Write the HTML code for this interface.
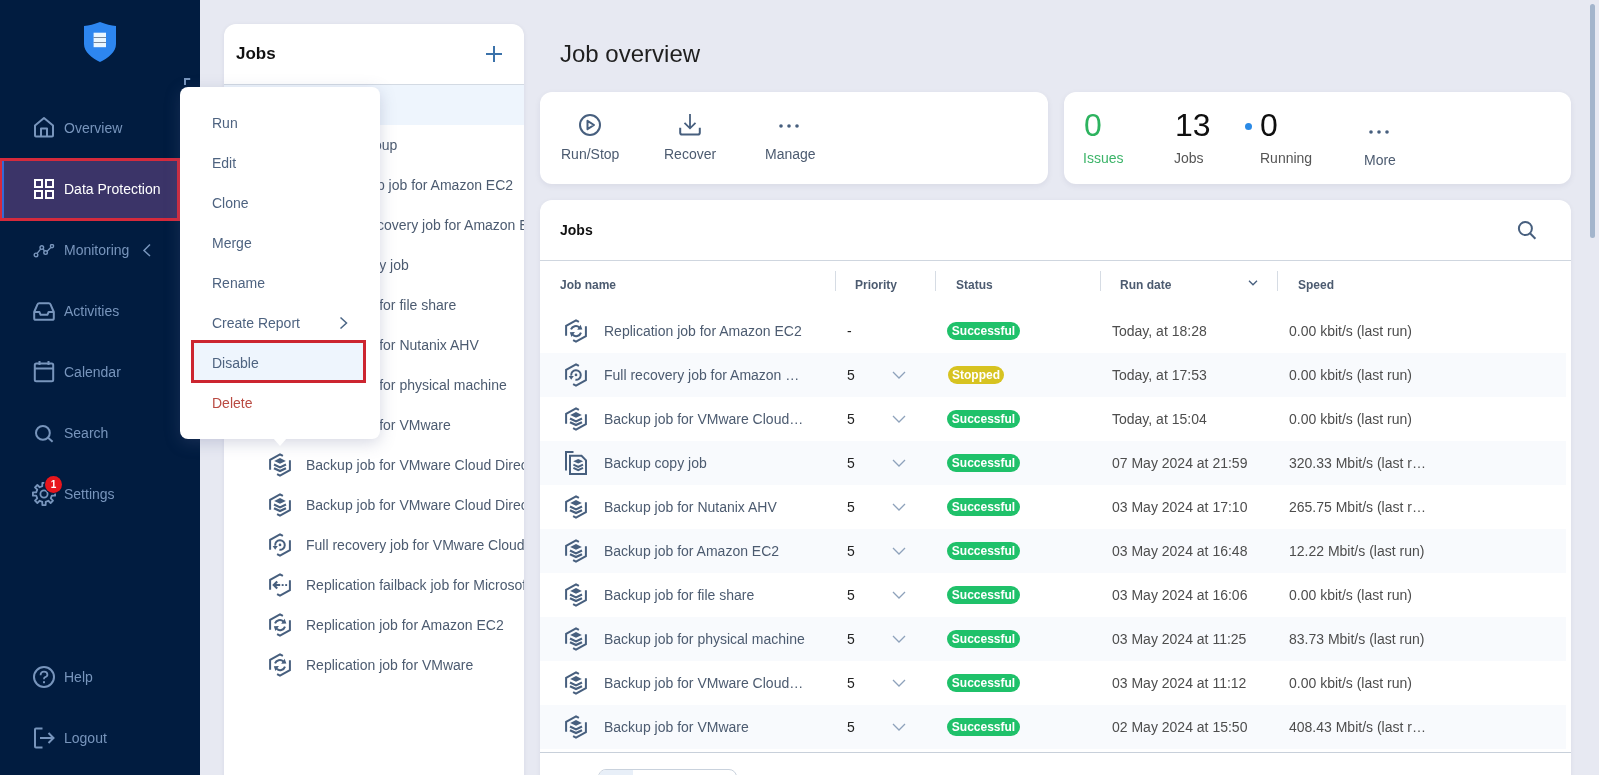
<!DOCTYPE html>
<html><head><meta charset="utf-8">
<style>
*{box-sizing:border-box;margin:0;padding:0}
html,body{width:1599px;height:775px;overflow:hidden;background:#e7e9f2;font-family:"Liberation Sans",sans-serif;}
.abs{position:absolute}
#root{position:absolute;left:0;top:0;width:1599px;height:775px;will-change:transform}
#sb{position:absolute;left:0;top:0;width:200px;height:775px;background:#011c40}
.nav{position:absolute;left:0;width:200px;height:40px;color:#7895bc;font-size:14px}
.nav .ic{position:absolute}
.nav .lb{position:absolute;left:64px;top:12px;line-height:16px}
#jl{position:absolute;left:224px;top:24px;width:300px;height:800px;background:#fff;border-radius:12px 12px 0 0;box-shadow:0 1px 5px rgba(30,30,70,.07)}
.card{position:absolute;background:#fff;border-radius:12px}
.li{position:absolute;left:0;width:300px;height:40px;font-size:14px;color:#4a6585}
.li .t{position:absolute;left:82px;top:13px;line-height:16px;white-space:nowrap}
.li svg{position:absolute;left:44px;top:8px}
#menu{position:absolute;left:180px;top:87px;width:200px;height:352px;background:#fff;border-radius:8px;box-shadow:0 4px 16px rgba(90,100,145,.25)}
.mi{position:absolute;left:0;width:200px;height:40px;font-size:14px;color:#4a6585}
.mi span{position:absolute;left:32px;top:13px;line-height:16px}
.lt{font-size:14px;line-height:16px;color:#4c5b70;white-space:nowrap}
.mt{font-size:14px;line-height:16px;white-space:nowrap}
.ct{font-size:14px;line-height:16px;color:#4c5b70;white-space:nowrap}
.num{font-size:32px;line-height:36px;white-space:nowrap}
.th{font-size:12px;font-weight:bold;line-height:14px;color:#4c5b70;white-space:nowrap}
.badge{height:18px;border-radius:9px;color:#fff;font-weight:bold;font-size:12px;line-height:18px;text-align:center}
</style></head><body><div id="root">

<div id="sb">
<svg class="abs" style="left:84px;top:22px" width="32" height="40" viewBox="0 0 32 40"><path d="M16 0 C10 2.5 5 3.5 0 4 V22 C0 30 8 36 16 40 C24 36 32 30 32 22 V4 C27 3.5 22 2.5 16 0Z" fill="#2d86f0"/><rect x="9.6" y="10.7" width="12.4" height="14.5" fill="#eaf6ff"/><rect x="9.6" y="15.2" width="12.4" height="0.7" fill="#4a5a70"/><rect x="9.6" y="20" width="12.4" height="0.7" fill="#4a5a70"/></svg>
<svg class="abs" style="left:184px;top:78px" width="8" height="8" viewBox="0 0 8 8"><path d="M1 7V1H6.2" stroke="#7895bc" stroke-width="2" fill="none"/></svg>

<div class="nav" style="top:108px">
<svg class="ic" style="left:33px;top:8px" width="22" height="22" viewBox="0 0 22 22" fill="none" stroke="#7895bc" stroke-width="2" stroke-linejoin="round"><path d="M2 9.5 L11 2 L20 9.5 V19.5 Q20 20.5 19 20.5 H3 Q2 20.5 2 19.5Z"/><path d="M8 20.5 V12.5 H14 V20.5"/></svg>
<span class="lb">Overview</span></div>

<div class="abs" style="left:-1px;top:158px;width:181px;height:63px;background:#3b3468;border:3px solid #d52a3c"></div>
<div class="abs" style="left:2px;top:161px;width:2px;height:57px;background:#3569d4"></div>
<div class="nav" style="top:169px;color:#fff">
<svg class="ic" style="left:34px;top:10px" width="20" height="20" viewBox="0 0 20 20" fill="none" stroke="#fff" stroke-width="2"><rect x="1" y="1" width="7" height="7"/><rect x="12" y="1" width="7" height="7"/><rect x="1" y="12" width="7" height="7"/><rect x="12" y="12" width="7" height="7"/></svg>
<span class="lb">Data Protection</span></div>

<div class="nav" style="top:230px">
<svg class="ic" style="left:33px;top:14px" width="22" height="15" viewBox="0 -0.5 22 15" fill="none" stroke="#7895bc" stroke-width="1.4"><path d="M4.1 8.9 L7.6 4.6 M10.1 4.5 L11.4 6.4 M13.9 7 L17.8 3.1"/><circle cx="3" cy="10.4" r="1.8"/><circle cx="8.8" cy="3.1" r="1.8"/><circle cx="12.6" cy="8.1" r="1.8"/><circle cx="19" cy="1.6" r="1.6"/></svg>
<span class="lb">Monitoring</span>
<svg class="abs" style="left:142px;top:13px" width="10" height="14" viewBox="0 0 10 14" fill="none" stroke="#7895bc" stroke-width="1.5"><path d="M8 1.5 L2 7.5 L8 13"/></svg></div>

<div class="nav" style="top:291px">
<svg class="ic" style="left:33px;top:11px" width="22" height="19" viewBox="0 0 22 19" fill="none" stroke="#7895bc" stroke-width="2" stroke-linejoin="round"><path d="M1.2 10 L4.6 2.2 Q5 1.2 6.2 1.2 H15.8 Q17 1.2 17.4 2.2 L20.8 10 V16.2 Q20.8 17.8 19.2 17.8 H2.8 Q1.2 17.8 1.2 16.2Z"/><path d="M1.2 10 H6.4 L7.6 12.8 H14.4 L15.6 10 H20.8"/></svg>
<span class="lb">Activities</span></div>

<div class="nav" style="top:352px">
<svg class="ic" style="left:33px;top:8px" width="22" height="23" viewBox="0 0 22 23" fill="none" stroke="#7895bc" stroke-width="2" stroke-linejoin="round"><rect x="1.8" y="3.5" width="18.4" height="17.8" rx="1.5"/><path d="M1.8 8.5 H20.2 M6.5 1 V5 M15.5 1 V5"/></svg>
<span class="lb">Calendar</span></div>

<div class="nav" style="top:413px">
<svg class="ic" style="left:34px;top:12px" width="20" height="18" viewBox="0 0 20 18" fill="none" stroke="#7895bc" stroke-width="2"><circle cx="8.9" cy="7.9" r="6.9"/><path d="M13.8 12.6 L18.6 16.8"/></svg>
<span class="lb">Search</span></div>

<div class="nav" style="top:474px">
<svg class="ic" style="left:31px;top:7px" width="26" height="26" viewBox="0 0 26 26" fill="none" stroke="#7895bc" stroke-width="1.8" stroke-linejoin="round"><path d="M11.29 5.19 L11.33 1.92 L14.67 1.92 L14.71 5.19 L17.31 6.26 L19.65 3.99 L22.01 6.35 L19.74 8.69 L20.81 11.29 L24.08 11.33 L24.08 14.67 L20.81 14.71 L19.74 17.31 L22.01 19.65 L19.65 22.01 L17.31 19.74 L14.71 20.81 L14.67 24.08 L11.33 24.08 L11.29 20.81 L8.69 19.74 L6.35 22.01 L3.99 19.65 L6.26 17.31 L5.19 14.71 L1.92 14.67 L1.92 11.33 L5.19 11.29 L6.26 8.69 L3.99 6.35 L6.35 3.99 L8.69 6.26Z"/><circle cx="13" cy="13" r="3.6"/></svg>
<span class="lb">Settings</span>
<div class="abs" style="left:45px;top:2px;width:17px;height:17px;border-radius:50%;background:#e8161c;box-shadow:0 0 0 1px #011c40;color:#fff;font-weight:bold;font-size:10px;line-height:17px;text-align:center">1</div></div>

<div class="nav" style="top:657px">
<svg class="ic" style="left:33px;top:9px" width="22" height="22" viewBox="0 0 22 22" fill="none" stroke="#7895bc" stroke-width="2"><circle cx="11" cy="11" r="10"/><path d="M7.6 9.2 Q7.6 5.6 11 5.6 Q14.4 5.6 14.4 8.8 Q14.4 10.6 11.8 11.4 Q11 11.8 11 13.2" stroke-width="1.8"/><rect x="10" y="15.2" width="2" height="2" fill="#7895bc" stroke="none"/></svg>
<span class="lb">Help</span></div>

<div class="nav" style="top:718px">
<svg class="ic" style="left:33px;top:9px" width="22" height="22" viewBox="0 0 22 22" fill="none" stroke="#7895bc" stroke-width="2"><path d="M9.5 1.5 H3 Q2 1.5 2 2.5 V19.5 Q2 20.5 3 20.5 H9.5"/><path d="M7 11 H20.5 M15.5 6 L20.5 11 L15.5 16"/></svg>
<span class="lb">Logout</span></div>
</div>

<div class="abs" style="left:560px;top:40px;font-size:24px;line-height:28px;color:#1f1f1f;white-space:nowrap">Job overview</div>
<div class="card" style="left:540px;top:92px;width:508px;height:92px;box-shadow:0 2px 6px rgba(30,30,70,.07)">
<svg class="abs" style="left:39px;top:22px" width="22" height="22" viewBox="0 0 22 22" fill="none" stroke="#475f7e" stroke-width="2"><circle cx="11" cy="11" r="10"/><path d="M8.5 6.8 L15 11 L8.5 15.2Z" stroke-linejoin="round"/></svg>
<div class="abs ct" style="left:21px;top:54px">Run/Stop</div>
<svg class="abs" style="left:138px;top:21px" width="24" height="23" viewBox="0 0 24 23" fill="none" stroke="#475f7e" stroke-width="2"><path d="M2.2 14.8 V19.8 Q2.2 21.6 4 21.6 H20 Q21.8 21.6 21.8 19.8 V14.8"/><path d="M12 1 V15 M6.5 9.8 L12 15.3 L17.5 9.8" stroke-width="1.8"/></svg>
<div class="abs ct" style="left:124px;top:54px">Recover</div>
<svg class="abs" style="left:238px;top:31px" width="22" height="6" viewBox="0 0 22 6" fill="#475f7e"><circle cx="3" cy="3" r="1.8"/><circle cx="11" cy="3" r="1.8"/><circle cx="19" cy="3" r="1.8"/></svg>
<div class="abs ct" style="left:225px;top:54px">Manage</div>
</div>
<div class="card" style="left:1064px;top:92px;width:507px;height:92px;box-shadow:0 2px 6px rgba(30,30,70,.07)">
<div class="abs num" style="left:20px;top:15px;color:#2db35f">0</div>
<div class="abs ct" style="left:19px;top:58px;color:#3cb469">Issues</div>
<div class="abs num" style="left:111px;top:15px;color:#0f0f0f">13</div>
<div class="abs ct" style="left:110px;top:58px;color:#555">Jobs</div>
<div class="abs" style="left:181px;top:30.5px;width:7px;height:7px;border-radius:50%;background:#2b8ae6"></div>
<div class="abs num" style="left:196px;top:15px;color:#0f0f0f">0</div>
<div class="abs ct" style="left:196px;top:58px;color:#555">Running</div>
<svg class="abs" style="left:304px;top:37px" width="22" height="6" viewBox="0 0 22 6" fill="#475f7e"><circle cx="3" cy="3" r="1.8"/><circle cx="11" cy="3" r="1.8"/><circle cx="19" cy="3" r="1.8"/></svg>
<div class="abs ct" style="left:300px;top:60px">More</div>
</div>
<div class="card" style="left:540px;top:200px;width:1031px;height:600px;border-radius:12px 12px 0 0;box-shadow:0 1px 5px rgba(30,30,70,.06)">
<div class="abs" style="left:20px;top:22px;font-weight:bold;font-size:14px;line-height:16px;color:#111">Jobs</div>
<svg class="abs" style="left:977px;top:21px" width="20" height="20" viewBox="0 0 20 20" fill="none" stroke="#475f7e" stroke-width="2"><circle cx="8.4" cy="7.5" r="6.5"/><path d="M13 12.3 L18.4 17.7"/></svg>
<div class="abs" style="left:0;top:60px;width:1031px;height:1px;background:#cfd6df"></div>
<div class="abs th" style="left:20px;top:78px">Job name</div>
<div class="abs th" style="left:315px;top:78px">Priority</div>
<div class="abs th" style="left:416px;top:78px">Status</div>
<div class="abs th" style="left:580px;top:78px">Run date</div>
<div class="abs th" style="left:758px;top:78px">Speed</div>
<div class="abs" style="left:295px;top:71px;width:1px;height:20px;background:#d6dce4"></div>
<div class="abs" style="left:395px;top:71px;width:1px;height:20px;background:#d6dce4"></div>
<div class="abs" style="left:560px;top:71px;width:1px;height:20px;background:#d6dce4"></div>
<div class="abs" style="left:737px;top:71px;width:1px;height:20px;background:#d6dce4"></div>
<svg class="abs" style="left:708px;top:80px" width="10" height="6" viewBox="0 0 10 6" fill="none" stroke="#475f7e" stroke-width="1.3"><path d="M1 0.8 L5 4.8 L9 0.8"/></svg>
<div class="abs" style="left:0;top:109px;width:1026px;height:44px;background:#fff"></div>
<svg class="abs" style="left:25px;top:119px" width="22" height="24" viewBox="0 0 22 24" fill="none" stroke="#475f7e" stroke-width="2"><path d="M1.1 16.8 V6.8 L11 1.3 L13.9 2.9" /><path d="M20.9 7.2 V17.2 L11 22.7 L8.1 21.1" /><path d="M6 10.4 A5.2 5.2 0 0 1 14.4 8.4" /><path d="M16 13.6 A5.2 5.2 0 0 1 7.6 15.8" /><path d="M15.6 5.8 L17.4 10.4 L12.2 10.8Z" fill="#475f7e" stroke="none"/><path d="M4.8 13.2 L6.4 18 L9.9 13Z" fill="#475f7e" stroke="none"/></svg>
<div class="abs lt" style="left:64px;top:123px">Replication job for Amazon EC2</div>
<div class="abs lt" style="left:307px;top:123px;color:#222">-</div>
<div class="abs badge" style="left:407px;top:122px;width:73px;background:#1fc16a">Successful</div>
<div class="abs lt" style="left:572px;top:123px;color:#4d4d4d">Today, at 18:28</div>
<div class="abs lt" style="left:749px;top:123px;color:#4d4d4d">0.00 kbit/s (last run)</div>
<div class="abs" style="left:0;top:153px;width:1026px;height:44px;background:#f8fafd"></div>
<svg class="abs" style="left:25px;top:163px" width="22" height="24" viewBox="0 0 22 24" fill="none" stroke="#475f7e" stroke-width="2"><path d="M1.1 16.8 V6.8 L11 1.3 L13.9 2.9" /><path d="M20.9 7.2 V17.2 L11 22.7 L8.1 21.1" /><path d="M6.2 12.6 A4.8 4.8 0 1 1 10.4 16.8" /><path d="M3.6 13 L8.8 13 L6.2 16.8Z" fill="#475f7e" stroke="none"/><circle cx="11" cy="11.9" r="1.35" fill="#475f7e" stroke="none"/></svg>
<div class="abs lt" style="left:64px;top:167px">Full recovery job for Amazon …</div>
<div class="abs lt" style="left:307px;top:167px;color:#222">5</div>
<svg class="abs" style="left:352px;top:171px" width="14" height="8" viewBox="0 0 14 8" fill="none" stroke="#8ea2bb" stroke-width="1.3"><path d="M1 1 L7 7 L13 1"/></svg>
<div class="abs badge" style="left:408px;top:166px;width:56px;background:#d7c321">Stopped</div>
<div class="abs lt" style="left:572px;top:167px;color:#4d4d4d">Today, at 17:53</div>
<div class="abs lt" style="left:749px;top:167px;color:#4d4d4d">0.00 kbit/s (last run)</div>
<div class="abs" style="left:0;top:197px;width:1026px;height:44px;background:#fff"></div>
<svg class="abs" style="left:25px;top:207px" width="22" height="24" viewBox="0 0 22 24" fill="none" stroke="#475f7e" stroke-width="2"><path d="M1.1 16.8 V6.8 L11 1.3 L13.9 2.9" /><path d="M20.9 7.2 V17.2 L11 22.7 L8.1 21.1" /><path d="M5.2 7.9 L11 5.1 L16.8 7.9 L11 10.7Z" fill="#475f7e" stroke="none"/><path d="M5 11.6 L11 14.4 L17 11.6 M5 15.3 L11 18.1 L17 15.3" stroke-width="2.2"/></svg>
<div class="abs lt" style="left:64px;top:211px">Backup job for VMware Cloud…</div>
<div class="abs lt" style="left:307px;top:211px;color:#222">5</div>
<svg class="abs" style="left:352px;top:215px" width="14" height="8" viewBox="0 0 14 8" fill="none" stroke="#8ea2bb" stroke-width="1.3"><path d="M1 1 L7 7 L13 1"/></svg>
<div class="abs badge" style="left:407px;top:210px;width:73px;background:#1fc16a">Successful</div>
<div class="abs lt" style="left:572px;top:211px;color:#4d4d4d">Today, at 15:04</div>
<div class="abs lt" style="left:749px;top:211px;color:#4d4d4d">0.00 kbit/s (last run)</div>
<div class="abs" style="left:0;top:241px;width:1026px;height:44px;background:#f8fafd"></div>
<svg class="abs" style="left:25px;top:251px" width="22" height="24" viewBox="0 0 22 24" fill="none" stroke="#475f7e" stroke-width="2"><path d="M1 19.5 V1 H8.5"/><path d="M5 4.8 H16.5 L21 9.4 V23 H5Z"/><path d="M8.2 10.2 L13.2 7.9 L18.2 10.2 L13.2 12.5Z" fill="#475f7e" stroke="none"/><path d="M8.4 13.6 L13.2 15.9 L18 13.6 M8.4 16.9 L13.2 19.2 L18 16.9"/></svg>
<div class="abs lt" style="left:64px;top:255px">Backup copy job</div>
<div class="abs lt" style="left:307px;top:255px;color:#222">5</div>
<svg class="abs" style="left:352px;top:259px" width="14" height="8" viewBox="0 0 14 8" fill="none" stroke="#8ea2bb" stroke-width="1.3"><path d="M1 1 L7 7 L13 1"/></svg>
<div class="abs badge" style="left:407px;top:254px;width:73px;background:#1fc16a">Successful</div>
<div class="abs lt" style="left:572px;top:255px;color:#4d4d4d">07 May 2024 at 21:59</div>
<div class="abs lt" style="left:749px;top:255px;color:#4d4d4d">320.33 Mbit/s (last r…</div>
<div class="abs" style="left:0;top:285px;width:1026px;height:44px;background:#fff"></div>
<svg class="abs" style="left:25px;top:295px" width="22" height="24" viewBox="0 0 22 24" fill="none" stroke="#475f7e" stroke-width="2"><path d="M1.1 16.8 V6.8 L11 1.3 L13.9 2.9" /><path d="M20.9 7.2 V17.2 L11 22.7 L8.1 21.1" /><path d="M5.2 7.9 L11 5.1 L16.8 7.9 L11 10.7Z" fill="#475f7e" stroke="none"/><path d="M5 11.6 L11 14.4 L17 11.6 M5 15.3 L11 18.1 L17 15.3" stroke-width="2.2"/></svg>
<div class="abs lt" style="left:64px;top:299px">Backup job for Nutanix AHV</div>
<div class="abs lt" style="left:307px;top:299px;color:#222">5</div>
<svg class="abs" style="left:352px;top:303px" width="14" height="8" viewBox="0 0 14 8" fill="none" stroke="#8ea2bb" stroke-width="1.3"><path d="M1 1 L7 7 L13 1"/></svg>
<div class="abs badge" style="left:407px;top:298px;width:73px;background:#1fc16a">Successful</div>
<div class="abs lt" style="left:572px;top:299px;color:#4d4d4d">03 May 2024 at 17:10</div>
<div class="abs lt" style="left:749px;top:299px;color:#4d4d4d">265.75 Mbit/s (last r…</div>
<div class="abs" style="left:0;top:329px;width:1026px;height:44px;background:#f8fafd"></div>
<svg class="abs" style="left:25px;top:339px" width="22" height="24" viewBox="0 0 22 24" fill="none" stroke="#475f7e" stroke-width="2"><path d="M1.1 16.8 V6.8 L11 1.3 L13.9 2.9" /><path d="M20.9 7.2 V17.2 L11 22.7 L8.1 21.1" /><path d="M5.2 7.9 L11 5.1 L16.8 7.9 L11 10.7Z" fill="#475f7e" stroke="none"/><path d="M5 11.6 L11 14.4 L17 11.6 M5 15.3 L11 18.1 L17 15.3" stroke-width="2.2"/></svg>
<div class="abs lt" style="left:64px;top:343px">Backup job for Amazon EC2</div>
<div class="abs lt" style="left:307px;top:343px;color:#222">5</div>
<svg class="abs" style="left:352px;top:347px" width="14" height="8" viewBox="0 0 14 8" fill="none" stroke="#8ea2bb" stroke-width="1.3"><path d="M1 1 L7 7 L13 1"/></svg>
<div class="abs badge" style="left:407px;top:342px;width:73px;background:#1fc16a">Successful</div>
<div class="abs lt" style="left:572px;top:343px;color:#4d4d4d">03 May 2024 at 16:48</div>
<div class="abs lt" style="left:749px;top:343px;color:#4d4d4d">12.22 Mbit/s (last run)</div>
<div class="abs" style="left:0;top:373px;width:1026px;height:44px;background:#fff"></div>
<svg class="abs" style="left:25px;top:383px" width="22" height="24" viewBox="0 0 22 24" fill="none" stroke="#475f7e" stroke-width="2"><path d="M1.1 16.8 V6.8 L11 1.3 L13.9 2.9" /><path d="M20.9 7.2 V17.2 L11 22.7 L8.1 21.1" /><path d="M5.2 7.9 L11 5.1 L16.8 7.9 L11 10.7Z" fill="#475f7e" stroke="none"/><path d="M5 11.6 L11 14.4 L17 11.6 M5 15.3 L11 18.1 L17 15.3" stroke-width="2.2"/></svg>
<div class="abs lt" style="left:64px;top:387px">Backup job for file share</div>
<div class="abs lt" style="left:307px;top:387px;color:#222">5</div>
<svg class="abs" style="left:352px;top:391px" width="14" height="8" viewBox="0 0 14 8" fill="none" stroke="#8ea2bb" stroke-width="1.3"><path d="M1 1 L7 7 L13 1"/></svg>
<div class="abs badge" style="left:407px;top:386px;width:73px;background:#1fc16a">Successful</div>
<div class="abs lt" style="left:572px;top:387px;color:#4d4d4d">03 May 2024 at 16:06</div>
<div class="abs lt" style="left:749px;top:387px;color:#4d4d4d">0.00 kbit/s (last run)</div>
<div class="abs" style="left:0;top:417px;width:1026px;height:44px;background:#f8fafd"></div>
<svg class="abs" style="left:25px;top:427px" width="22" height="24" viewBox="0 0 22 24" fill="none" stroke="#475f7e" stroke-width="2"><path d="M1.1 16.8 V6.8 L11 1.3 L13.9 2.9" /><path d="M20.9 7.2 V17.2 L11 22.7 L8.1 21.1" /><path d="M5.2 7.9 L11 5.1 L16.8 7.9 L11 10.7Z" fill="#475f7e" stroke="none"/><path d="M5 11.6 L11 14.4 L17 11.6 M5 15.3 L11 18.1 L17 15.3" stroke-width="2.2"/></svg>
<div class="abs lt" style="left:64px;top:431px">Backup job for physical machine</div>
<div class="abs lt" style="left:307px;top:431px;color:#222">5</div>
<svg class="abs" style="left:352px;top:435px" width="14" height="8" viewBox="0 0 14 8" fill="none" stroke="#8ea2bb" stroke-width="1.3"><path d="M1 1 L7 7 L13 1"/></svg>
<div class="abs badge" style="left:407px;top:430px;width:73px;background:#1fc16a">Successful</div>
<div class="abs lt" style="left:572px;top:431px;color:#4d4d4d">03 May 2024 at 11:25</div>
<div class="abs lt" style="left:749px;top:431px;color:#4d4d4d">83.73 Mbit/s (last run)</div>
<div class="abs" style="left:0;top:461px;width:1026px;height:44px;background:#fff"></div>
<svg class="abs" style="left:25px;top:471px" width="22" height="24" viewBox="0 0 22 24" fill="none" stroke="#475f7e" stroke-width="2"><path d="M1.1 16.8 V6.8 L11 1.3 L13.9 2.9" /><path d="M20.9 7.2 V17.2 L11 22.7 L8.1 21.1" /><path d="M5.2 7.9 L11 5.1 L16.8 7.9 L11 10.7Z" fill="#475f7e" stroke="none"/><path d="M5 11.6 L11 14.4 L17 11.6 M5 15.3 L11 18.1 L17 15.3" stroke-width="2.2"/></svg>
<div class="abs lt" style="left:64px;top:475px">Backup job for VMware Cloud…</div>
<div class="abs lt" style="left:307px;top:475px;color:#222">5</div>
<svg class="abs" style="left:352px;top:479px" width="14" height="8" viewBox="0 0 14 8" fill="none" stroke="#8ea2bb" stroke-width="1.3"><path d="M1 1 L7 7 L13 1"/></svg>
<div class="abs badge" style="left:407px;top:474px;width:73px;background:#1fc16a">Successful</div>
<div class="abs lt" style="left:572px;top:475px;color:#4d4d4d">03 May 2024 at 11:12</div>
<div class="abs lt" style="left:749px;top:475px;color:#4d4d4d">0.00 kbit/s (last run)</div>
<div class="abs" style="left:0;top:505px;width:1026px;height:44px;background:#f8fafd"></div>
<svg class="abs" style="left:25px;top:515px" width="22" height="24" viewBox="0 0 22 24" fill="none" stroke="#475f7e" stroke-width="2"><path d="M1.1 16.8 V6.8 L11 1.3 L13.9 2.9" /><path d="M20.9 7.2 V17.2 L11 22.7 L8.1 21.1" /><path d="M5.2 7.9 L11 5.1 L16.8 7.9 L11 10.7Z" fill="#475f7e" stroke="none"/><path d="M5 11.6 L11 14.4 L17 11.6 M5 15.3 L11 18.1 L17 15.3" stroke-width="2.2"/></svg>
<div class="abs lt" style="left:64px;top:519px">Backup job for VMware</div>
<div class="abs lt" style="left:307px;top:519px;color:#222">5</div>
<svg class="abs" style="left:352px;top:523px" width="14" height="8" viewBox="0 0 14 8" fill="none" stroke="#8ea2bb" stroke-width="1.3"><path d="M1 1 L7 7 L13 1"/></svg>
<div class="abs badge" style="left:407px;top:518px;width:73px;background:#1fc16a">Successful</div>
<div class="abs lt" style="left:572px;top:519px;color:#4d4d4d">02 May 2024 at 15:50</div>
<div class="abs lt" style="left:749px;top:519px;color:#4d4d4d">408.43 Mbit/s (last r…</div>
<div class="abs" style="left:0;top:552px;width:1031px;height:1px;background:#c8d0da"></div>
<div class="abs" style="left:58px;top:569px;width:139px;height:40px;border:1px solid #c9d2dd;border-radius:8px;overflow:hidden"><div style="position:absolute;left:0;top:0;width:34px;height:40px;background:#e8eff8"></div></div>
</div>
<div class="abs" style="left:1590px;top:4px;width:5px;height:234px;border-radius:3px;background:#a3b5cc"></div>
<div id="jl"><div class="abs" style="left:12px;top:20px;font-weight:bold;font-size:17px;line-height:20px;color:#111">Jobs</div>
<svg class="abs" style="left:262px;top:22px" width="16" height="16" viewBox="0 0 16 16" stroke="#3b72aa" stroke-width="2"><path d="M8 0V16M0 8H16"/></svg>
<div class="abs" style="left:0;top:60px;width:300px;height:1px;background:#d3dae3"></div>
<div class="abs" style="left:0;top:61px;width:300px;height:40px;background:#eef5fd"></div>
<div class="abs" style="left:0;top:0;width:300px;height:751px;overflow:hidden">
<div class="abs lt" style="left:87px;top:113px">Backup group</div>
<div class="abs lt" style="left:114px;top:153px">Backup job for Amazon EC2</div>
<div class="abs lt" style="left:114px;top:193px">Full recovery job for Amazon EC2</div>
<svg class="abs" style="left:45px;top:229px" width="22" height="24" viewBox="0 0 22 24" fill="none" stroke="#475f7e" stroke-width="2"><path d="M1 19.5 V1 H8.5"/><path d="M5 4.8 H16.5 L21 9.4 V23 H5Z"/><path d="M8.2 10.2 L13.2 7.9 L18.2 10.2 L13.2 12.5Z" fill="#475f7e" stroke="none"/><path d="M8.4 13.6 L13.2 15.9 L18 13.6 M8.4 16.9 L13.2 19.2 L18 16.9"/></svg>
<div class="abs lt" style="left:82px;top:233px">Backup copy job</div>
<svg class="abs" style="left:45px;top:269px" width="22" height="24" viewBox="0 0 22 24" fill="none" stroke="#475f7e" stroke-width="2"><path d="M1.1 16.8 V6.8 L11 1.3 L13.9 2.9" /><path d="M20.9 7.2 V17.2 L11 22.7 L8.1 21.1" /><path d="M5.2 7.9 L11 5.1 L16.8 7.9 L11 10.7Z" fill="#475f7e" stroke="none"/><path d="M5 11.6 L11 14.4 L17 11.6 M5 15.3 L11 18.1 L17 15.3" stroke-width="2.2"/></svg>
<div class="abs lt" style="left:82px;top:273px">Backup job for file share</div>
<svg class="abs" style="left:45px;top:309px" width="22" height="24" viewBox="0 0 22 24" fill="none" stroke="#475f7e" stroke-width="2"><path d="M1.1 16.8 V6.8 L11 1.3 L13.9 2.9" /><path d="M20.9 7.2 V17.2 L11 22.7 L8.1 21.1" /><path d="M5.2 7.9 L11 5.1 L16.8 7.9 L11 10.7Z" fill="#475f7e" stroke="none"/><path d="M5 11.6 L11 14.4 L17 11.6 M5 15.3 L11 18.1 L17 15.3" stroke-width="2.2"/></svg>
<div class="abs lt" style="left:82px;top:313px">Backup job for Nutanix AHV</div>
<svg class="abs" style="left:45px;top:349px" width="22" height="24" viewBox="0 0 22 24" fill="none" stroke="#475f7e" stroke-width="2"><path d="M1.1 16.8 V6.8 L11 1.3 L13.9 2.9" /><path d="M20.9 7.2 V17.2 L11 22.7 L8.1 21.1" /><path d="M5.2 7.9 L11 5.1 L16.8 7.9 L11 10.7Z" fill="#475f7e" stroke="none"/><path d="M5 11.6 L11 14.4 L17 11.6 M5 15.3 L11 18.1 L17 15.3" stroke-width="2.2"/></svg>
<div class="abs lt" style="left:82px;top:353px">Backup job for physical machine</div>
<svg class="abs" style="left:45px;top:389px" width="22" height="24" viewBox="0 0 22 24" fill="none" stroke="#475f7e" stroke-width="2"><path d="M1.1 16.8 V6.8 L11 1.3 L13.9 2.9" /><path d="M20.9 7.2 V17.2 L11 22.7 L8.1 21.1" /><path d="M5.2 7.9 L11 5.1 L16.8 7.9 L11 10.7Z" fill="#475f7e" stroke="none"/><path d="M5 11.6 L11 14.4 L17 11.6 M5 15.3 L11 18.1 L17 15.3" stroke-width="2.2"/></svg>
<div class="abs lt" style="left:82px;top:393px">Backup job for VMware</div>
<svg class="abs" style="left:45px;top:429px" width="22" height="24" viewBox="0 0 22 24" fill="none" stroke="#475f7e" stroke-width="2"><path d="M1.1 16.8 V6.8 L11 1.3 L13.9 2.9" /><path d="M20.9 7.2 V17.2 L11 22.7 L8.1 21.1" /><path d="M5.2 7.9 L11 5.1 L16.8 7.9 L11 10.7Z" fill="#475f7e" stroke="none"/><path d="M5 11.6 L11 14.4 L17 11.6 M5 15.3 L11 18.1 L17 15.3" stroke-width="2.2"/></svg>
<div class="abs lt" style="left:82px;top:433px">Backup job for VMware Cloud Director</div>
<svg class="abs" style="left:45px;top:469px" width="22" height="24" viewBox="0 0 22 24" fill="none" stroke="#475f7e" stroke-width="2"><path d="M1.1 16.8 V6.8 L11 1.3 L13.9 2.9" /><path d="M20.9 7.2 V17.2 L11 22.7 L8.1 21.1" /><path d="M5.2 7.9 L11 5.1 L16.8 7.9 L11 10.7Z" fill="#475f7e" stroke="none"/><path d="M5 11.6 L11 14.4 L17 11.6 M5 15.3 L11 18.1 L17 15.3" stroke-width="2.2"/></svg>
<div class="abs lt" style="left:82px;top:473px">Backup job for VMware Cloud Director</div>
<svg class="abs" style="left:45px;top:509px" width="22" height="24" viewBox="0 0 22 24" fill="none" stroke="#475f7e" stroke-width="2"><path d="M1.1 16.8 V6.8 L11 1.3 L13.9 2.9" /><path d="M20.9 7.2 V17.2 L11 22.7 L8.1 21.1" /><path d="M6.2 12.6 A4.8 4.8 0 1 1 10.4 16.8" /><path d="M3.6 13 L8.8 13 L6.2 16.8Z" fill="#475f7e" stroke="none"/><circle cx="11" cy="11.9" r="1.35" fill="#475f7e" stroke="none"/></svg>
<div class="abs lt" style="left:82px;top:513px">Full recovery job for VMware Cloud Director</div>
<svg class="abs" style="left:45px;top:549px" width="22" height="24" viewBox="0 0 22 24" fill="none" stroke="#475f7e" stroke-width="2"><path d="M1.1 16.8 V6.8 L11 1.3 L13.9 2.9" /><path d="M20.9 7.2 V17.2 L11 22.7 L8.1 21.1" /><path d="M8.2 8.4 L4.7 12 L8.2 15.6" stroke-width="2.1"/><path d="M5 12 H11.2" stroke-width="2.1"/><rect x="12.7" y="11.1" width="1.9" height="1.9" fill="#475f7e" stroke="none"/><rect x="16.2" y="11.1" width="1.9" height="1.9" fill="#475f7e" stroke="none"/></svg>
<div class="abs lt" style="left:82px;top:553px">Replication failback job for Microsoft Hyper-V</div>
<svg class="abs" style="left:45px;top:589px" width="22" height="24" viewBox="0 0 22 24" fill="none" stroke="#475f7e" stroke-width="2"><path d="M1.1 16.8 V6.8 L11 1.3 L13.9 2.9" /><path d="M20.9 7.2 V17.2 L11 22.7 L8.1 21.1" /><path d="M6 10.4 A5.2 5.2 0 0 1 14.4 8.4" /><path d="M16 13.6 A5.2 5.2 0 0 1 7.6 15.8" /><path d="M15.6 5.8 L17.4 10.4 L12.2 10.8Z" fill="#475f7e" stroke="none"/><path d="M4.8 13.2 L6.4 18 L9.9 13Z" fill="#475f7e" stroke="none"/></svg>
<div class="abs lt" style="left:82px;top:593px">Replication job for Amazon EC2</div>
<svg class="abs" style="left:45px;top:629px" width="22" height="24" viewBox="0 0 22 24" fill="none" stroke="#475f7e" stroke-width="2"><path d="M1.1 16.8 V6.8 L11 1.3 L13.9 2.9" /><path d="M20.9 7.2 V17.2 L11 22.7 L8.1 21.1" /><path d="M6 10.4 A5.2 5.2 0 0 1 14.4 8.4" /><path d="M16 13.6 A5.2 5.2 0 0 1 7.6 15.8" /><path d="M15.6 5.8 L17.4 10.4 L12.2 10.8Z" fill="#475f7e" stroke="none"/><path d="M4.8 13.2 L6.4 18 L9.9 13Z" fill="#475f7e" stroke="none"/></svg>
<div class="abs lt" style="left:82px;top:633px">Replication job for VMware</div>
</div></div>

<div id="menu">
<div class="abs" style="left:11px;top:253px;width:175px;height:43px;background:#eef5fd;border:3px solid #cc2530"></div>
<div class="abs mt" style="left:32px;top:28px;color:#4e6380">Run</div>
<div class="abs mt" style="left:32px;top:68px;color:#4e6380">Edit</div>
<div class="abs mt" style="left:32px;top:108px;color:#4e6380">Clone</div>
<div class="abs mt" style="left:32px;top:148px;color:#4e6380">Merge</div>
<div class="abs mt" style="left:32px;top:188px;color:#4e6380">Rename</div>
<div class="abs mt" style="left:32px;top:228px;color:#4e6380">Create Report</div>
<div class="abs mt" style="left:32px;top:268px;color:#4e6380">Disable</div>
<div class="abs mt" style="left:32px;top:308px;color:#b94a42">Delete</div>
<svg class="abs" style="left:159px;top:229px" width="9" height="14" viewBox="0 0 9 14" fill="none" stroke="#4a6585" stroke-width="1.5"><path d="M1.5 1.5 L7.5 7 L1.5 12.5"/></svg>
<svg class="abs" style="left:93px;top:351px" width="14" height="9" viewBox="0 0 14 9"><path d="M0 0 H14 L7 8Z" fill="#fff"/></svg>
</div>

</div></body></html>
